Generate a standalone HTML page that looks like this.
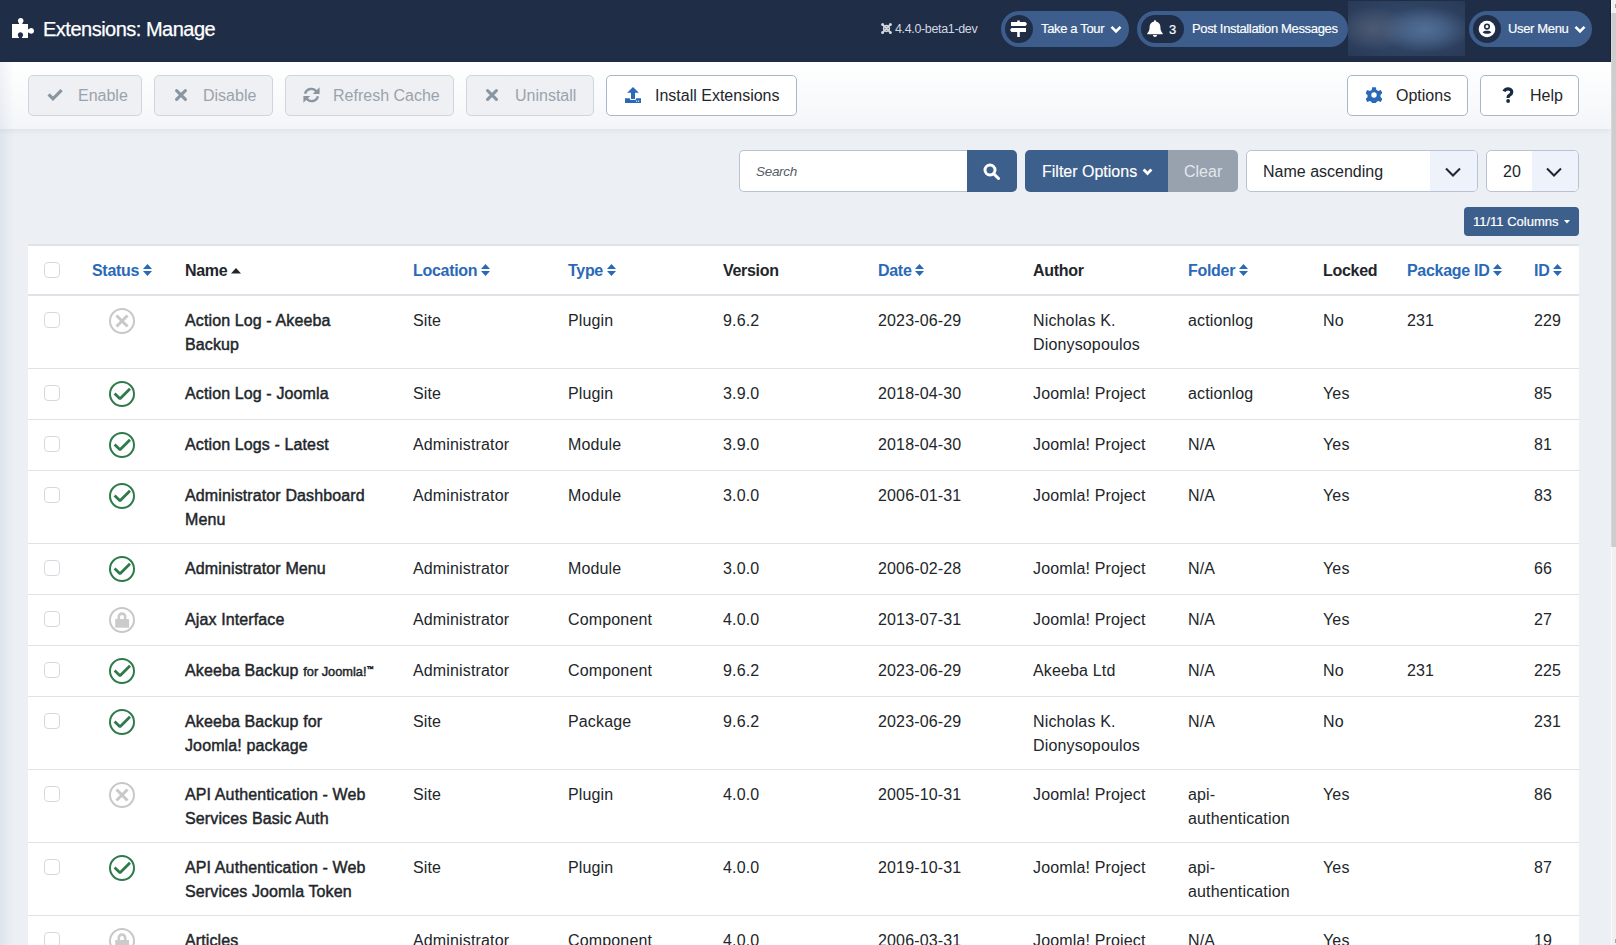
<!DOCTYPE html>
<html><head><meta charset="utf-8">
<style>
*{box-sizing:border-box;margin:0;padding:0}
html,body{width:1616px;height:945px;overflow:hidden}
body{font-family:"Liberation Sans",sans-serif;background:#ecf0f5;color:#22262a;position:relative}
.abs{position:absolute}
#hdr{left:0;top:0;width:1611px;height:62px;background:#1f2d47}
#title{left:43px;top:16px;font-size:20px;letter-spacing:-0.5px;-webkit-text-stroke:0.25px #fff;line-height:26px;color:#fff;white-space:nowrap}
#ver{left:895px;top:21px;font-size:12.5px;letter-spacing:-0.35px;line-height:16px;color:#d3d8e0;white-space:nowrap}
.pill{position:absolute;top:11px;height:36px;border-radius:18px;background:#3d5e8d;color:#fff;font-size:13px;white-space:nowrap}
.pill .circ{position:absolute;left:4px;top:4px;width:28px;height:28px;border-radius:14px;background:#1f2d47}
.pill .txt{position:absolute;top:10px;line-height:16px;letter-spacing:-0.35px;-webkit-text-stroke:0.15px #fff}
#blur{left:1348px;top:1px;width:117px;height:55px;background:radial-gradient(ellipse 38% 42% at 66% 52%,rgba(82,110,150,1) 0%,rgba(82,110,150,.6) 45%,rgba(82,110,150,0) 100%),radial-gradient(ellipse 30% 40% at 22% 50%,rgba(80,92,115,.9) 0%,rgba(80,92,115,0) 100%),radial-gradient(ellipse 70% 70% at 50% 50%,#3a5274 0%,#2e4262 60%,#293a56 100%)}
#scroll{left:1611px;top:0;width:5px;height:945px;background:#f0f0f0;border-left:1px solid #fafafa}
#thumb{left:1611px;top:13px;width:5px;height:534px;background:#cdcdcd;border-left:1px solid #d8d8d8}
#sub{left:0;top:62px;width:1611px;height:67px;background:linear-gradient(#fff,#f3f6f9);box-shadow:0 2px 6px rgba(0,0,0,.06)}
.tb{position:absolute;top:75px;height:41px;border:1px solid #cfd5dc;border-radius:5px;background:#eef0f3;color:#9aa2ab;font-size:16px;line-height:39px;white-space:nowrap}
.tb.act{background:#fff;border-color:#aab6c7}
.tbt{position:absolute;top:85px;font-size:16px;line-height:22px;color:#22262a;white-space:nowrap}
.tbt.dis{color:#9aa3ad}

.fi{position:absolute;top:150px;height:42px}
#search{left:739px;width:229px;border:1px solid #b7c3d4;border-right:0;border-radius:5px 0 0 5px;background:#fff;font-style:italic;font-size:13.5px;letter-spacing:-0.3px;color:#565d66;padding-left:16px;padding-top:1px;line-height:40px}
#sbtn{left:967px;width:50px;background:#3d5f8c;border-radius:0 5px 5px 0}
#fopt{left:1025px;width:143px;background:#3d5f8c;border-radius:5px 0 0 5px;color:#fff;-webkit-text-stroke:0.15px #fff;font-size:16px;line-height:42px;padding-top:1px;padding-left:17px;white-space:nowrap}
#clear{left:1168px;width:70px;background:#98a2ae;border-radius:0 5px 5px 0;color:#e3e7ec;font-size:16px;line-height:42px;padding-top:1px;padding-left:16px}
.sel{border:1px solid #b7c3d4;border-radius:5px;background:#fff;font-size:16px;line-height:40px;padding-top:1px;color:#22262a;overflow:hidden;white-space:nowrap}
.sel .arr{position:absolute;top:0;right:0;height:40px;background:#eef2fa}
#cols{position:absolute;left:1464px;top:207px;width:115px;height:29px;background:#3d5f8c;border-radius:4px;color:#fff;font-size:13px;-webkit-text-stroke:0.2px #fff;line-height:29px;padding-left:9px;white-space:nowrap}
#tbl{position:absolute;left:28px;top:244px;width:1551px;border-collapse:collapse;table-layout:fixed;background:#fff;font-size:16px;line-height:24px;border-top:2px solid #dfe3e8}
#tbl td,#tbl th{padding:13px 16px 11px;text-align:left;vertical-align:top;white-space:nowrap;font-weight:400}
#tbl thead th{font-weight:700;letter-spacing:-0.3px;border-bottom:2px solid #dfe3e8;color:#22262a}
#tbl thead th a{color:#2a69b8;text-decoration:none}
#tbl tbody tr{border-bottom:1px solid #dfe3e8}
#tbl tbody td{letter-spacing:0.15px}
#tbl td.cb,#tbl td.st,#tbl thead th.cb{padding-top:12px;padding-bottom:12px}
#tbl tbody th.nm{font-weight:400;-webkit-text-stroke:0.45px #22262a;letter-spacing:0.12px}
#tbl small{font-size:12.8px;letter-spacing:0;line-height:1}
.chk{display:inline-block;width:16px;height:16px;border:1px solid #d5d9de;border-radius:4px;vertical-align:top;margin-top:4px;background:#fff}
.si{display:inline-block;vertical-align:top;width:26px;height:26px;border-radius:50%;border:2px solid #c8c8c8;position:relative;margin-left:17px}
.si svg{position:absolute;left:-2px;top:-2px}
.si.ok{border-color:#2e7a4b}
.sort{display:inline-block;vertical-align:top;margin-left:4px;margin-top:5px}
</style></head>
<body>
<div id="hdr" class="abs"></div>
<svg class="abs" style="left:11px;top:18px" width="23" height="21" viewBox="0 0 23 21"><path fill="#fff" d="M1 6h6.5c.6 0 .8-.6.4-1-.7-.6-1-1.4-1-2.2C6.9 1.3 8 0 9.7 0s2.8 1.3 2.8 2.8c0 .8-.4 1.6-1 2.2-.4.4-.2 1 .4 1H17v4.7c0 .6.6.8 1 .4.6-.7 1.4-1 2.2-1 1.5 0 2.8 1.1 2.8 2.8s-1.3 2.8-2.8 2.8c-.8 0-1.6-.4-2.2-1-.4-.4-1-.2-1 .4V20H11.5c-.6 0-.8-.6-.4-1 .6-.6 1-1.3 1-2.1 0-1.5-1.2-2.7-2.7-2.7S6.8 15.4 6.8 16.9c0 .8.4 1.5 1 2.1.4.4.2 1-.4 1H1z"/></svg>
<div id="title" class="abs">Extensions: Manage</div>
<svg class="abs" style="left:881px;top:23px" width="11" height="11" viewBox="0 0 11 11"><g fill="none" stroke="#d3d8e0" stroke-width="1.6" stroke-linecap="round"><path d="M2 2.2l7 6.6M9 2.2l-7 6.6"/><path d="M3.2 3.8q2.3-2.4 4.6 0M3.2 7.2q2.3 2.4 4.6 0M3.8 3.2q-2.4 2.3 0 4.6M7.2 3.2q2.4 2.3 0 4.6"/></g><g fill="#d3d8e0"><circle cx="1.6" cy="1.6" r="1.5"/><circle cx="9.4" cy="1.6" r="1.5"/><circle cx="1.6" cy="9.4" r="1.5"/><circle cx="9.4" cy="9.4" r="1.5"/></g></svg>
<div id="ver" class="abs">4.4.0-beta1-dev</div>
<div class="pill" style="left:1001px;width:128px"><div class="circ"><svg style="position:absolute;left:5px;top:5px" width="17" height="17" viewBox="0 0 17 17"><path fill="#fff" d="M1 2h14.5l1.5 2-1.5 2H1zM1.5 8H16v4H1.5L0 10zM7.2 0.5h2.6V2H7.2zM7.2 12h2.6v5H7.2z"/></svg></div><div class="txt" style="left:40px">Take a Tour</div><svg style="position:absolute;left:109px;top:14px" width="12" height="9" viewBox="0 0 12 9"><path d="M1.5 1.8l4.5 4.5 4.5-4.5" stroke="#fff" stroke-width="2.6" fill="none"/></svg></div>
<div class="pill" style="left:1137px;width:211px"><div class="circ" style="width:43px"><svg style="position:absolute;left:6px;top:5px" width="16" height="17" viewBox="0 0 16 17"><path fill="#fff" d="M8 0.3c.8 0 1 .5 1 1.2 2.8.5 4.4 2.8 4.4 5.5 0 3.1.8 4.7 2.2 6.3.4.5.2 1-.4 1H0.8c-.6 0-.8-.5-.4-1 1.4-1.6 2.2-3.2 2.2-6.3 0-2.7 1.6-5 4.4-5.5 0-.7.2-1.2 1-1.2zM6 15h4c0 1.2-.9 2-2 2s-2-.8-2-2z"/></svg><div style="position:absolute;left:28px;top:7px;font-size:13px;line-height:16px;color:#fff;-webkit-text-stroke:0.15px #fff">3</div></div><div class="txt" style="left:55px">Post Installation Messages</div></div>
<div id="blur" class="abs"></div>
<div class="pill" style="left:1469px;width:123px"><div class="circ"><svg style="position:absolute;left:5px;top:5px" width="18" height="18" viewBox="0 0 18 18"><circle cx="9" cy="9" r="8.3" fill="#fff"/><circle cx="9" cy="6.6" r="2.3" fill="none" stroke="#1f2d47" stroke-width="1.6"/><path d="M4.6 12.2c1.2-1.1 2.6-1.5 4.4-1.5s3.2.4 4.4 1.5c-1.2 1.1-2.6 1.6-4.4 1.6s-3.2-.5-4.4-1.6z" fill="#1f2d47"/></svg></div><div class="txt" style="left:39px">User Menu</div><svg style="position:absolute;left:105px;top:14px" width="12" height="9" viewBox="0 0 12 9"><path d="M1.5 1.8l4.5 4.5 4.5-4.5" stroke="#fff" stroke-width="2.6" fill="none"/></svg></div>

<div id="sub" class="abs"></div>
<div class="tb" style="left:28px;width:114px"></div><span class="tbt dis" style="left:78px">Enable</span>
<svg class="abs" style="left:47px;top:89px" width="16" height="13" viewBox="0 0 16 13"><path d="M1.6 5.4l4.4 4.4 8.6-8.6" stroke="#8a95a2" stroke-width="3.2" fill="none" stroke-linejoin="miter"/></svg>
<div class="tb" style="left:154px;width:119px"></div><span class="tbt dis" style="left:203px">Disable</span>
<svg class="abs" style="left:175px;top:89px" width="12" height="12" viewBox="0 0 12 12"><path d="M1.6 1.6l8.8 8.8M10.4 1.6l-8.8 8.8" stroke="#8a95a2" stroke-width="3" stroke-linecap="round" fill="none"/></svg>
<div class="tb" style="left:285px;width:169px"></div><span class="tbt dis" style="left:333px">Refresh Cache</span>
<svg class="abs" style="left:303px;top:87px" width="17" height="16" viewBox="0 0 17 16"><g fill="none" stroke="#8a95a2" stroke-width="2.4"><path d="M2.1 6.8A6.3 6.3 0 0 1 13.4 4.6"/><path d="M14.9 9.2A6.3 6.3 0 0 1 3.6 11.4"/></g><path fill="#8a95a2" d="M16.6 0.3V7.1H9.8zM0.4 15.7V8.9h6.8z"/></svg>
<div class="tb" style="left:466px;width:128px"></div><span class="tbt dis" style="left:515px">Uninstall</span>
<svg class="abs" style="left:486px;top:89px" width="12" height="12" viewBox="0 0 12 12"><path d="M1.6 1.6l8.8 8.8M10.4 1.6l-8.8 8.8" stroke="#8a95a2" stroke-width="3" stroke-linecap="round" fill="none"/></svg>
<div class="tb act" style="left:606px;width:191px"></div><span class="tbt" style="left:655px">Install Extensions</span>
<svg class="abs" style="left:625px;top:87px" width="16" height="16" viewBox="0 0 16 16"><path fill="#2a69b8" d="M8 0l5.8 5.8H10V12H6V5.8H2.2zM0 11.2h4.7l.8 1.8h5l.8-1.8H16V16H0z"/><circle cx="11.6" cy="14.2" r=".6" fill="#fff"/><circle cx="13.6" cy="14.2" r=".6" fill="#fff"/></svg>
<div class="tb act" style="left:1347px;width:121px"></div><span class="tbt" style="left:1396px">Options</span>
<svg class="abs" style="left:1366px;top:87px" width="16" height="16" viewBox="0 0 16 16"><path fill="#2a69b8" fill-rule="evenodd" d="M6.2 0.2h3.6l.5 2.6 1.9 1.1 2.5-.9 1.8 3.1-2 1.7v2.3l2 1.7-1.8 3.1-2.5-.9-1.9 1.1-.5 2.6H6.2l-.5-2.6-1.9-1.1-2.5.9L-.5 11.9l2-1.7V7.9l-2-1.7L1.3 3.1l2.5.9 1.9-1.1zM8 5.3a2.7 2.7 0 1 0 0 5.4 2.7 2.7 0 1 0 0-5.4z"/></svg>
<div class="tb act" style="left:1480px;width:99px"></div><span class="tbt" style="left:1530px">Help</span>
<svg class="abs" style="left:1502px;top:87px" width="12" height="16" viewBox="0 0 12 16"><path d="M2 4.4c.7-1.6 2.1-2.6 3.9-2.6 2.2 0 3.9 1.4 3.9 3.3 0 1.6-1 2.4-2.3 3.1-1 .5-1.4 1-1.4 2v.7" stroke="#1a2a44" stroke-width="3.2" fill="none"/><circle cx="6.1" cy="14" r="1.9" fill="#1a2a44"/></svg>
<div id="search" class="fi">Search</div>
<div id="sbtn" class="fi"><svg style="position:absolute;left:16px;top:13px" width="18" height="17" viewBox="0 0 18 17"><circle cx="7" cy="7" r="5" stroke="#fff" stroke-width="3" fill="none"/><path d="M10.5 10.5l5 5" stroke="#fff" stroke-width="3" stroke-linecap="round"/></svg></div>
<div id="fopt" class="fi">Filter Options <svg width="11" height="8" viewBox="0 0 11 8" style="vertical-align:1px"><path d="M1.6 1.6l3.9 3.9 3.9-3.9" stroke="#fff" stroke-width="2.8" fill="none"/></svg></div>
<div id="clear" class="fi">Clear</div>
<div class="fi sel" style="left:1246px;width:232px"><span style="padding-left:16px">Name ascending</span><div class="arr" style="width:47px"><svg style="position:absolute;left:15px;top:16px" width="16" height="10" viewBox="0 0 16 10"><path d="M1 1.5l7 7 7-7" stroke="#22262a" stroke-width="2" fill="none"/></svg></div></div>
<div class="fi sel" style="left:1486px;width:93px"><span style="padding-left:16px">20</span><div class="arr" style="width:46px"><svg style="position:absolute;left:14px;top:16px" width="16" height="10" viewBox="0 0 16 10"><path d="M1 1.5l7 7 7-7" stroke="#22262a" stroke-width="2" fill="none"/></svg></div></div>
<div id="cols">11/11 Columns <svg width="6" height="4" viewBox="0 0 6 4" style="vertical-align:2px;margin-left:2px"><path d="M0 0h6L3 3.5z" fill="#fff"/></svg></div>
<table id="tbl">
<colgroup><col style="width:48px"><col style="width:93px"><col style="width:228px"><col style="width:155px"><col style="width:155px"><col style="width:155px"><col style="width:155px"><col style="width:155px"><col style="width:135px"><col style="width:84px"><col style="width:127px"><col style="width:61px"></colgroup>
<thead><tr>
<th class="cb"><span class="chk"></span></th>
<th><a>Status</a><svg class="sort" width="9" height="12" viewBox="0 0 9 12"><path d="M4.5 0L9 5H0zM0 7h9l-4.5 5z" fill="#2a69b8"/></svg></th>
<th>Name<svg class="sort" width="10" height="6" viewBox="0 0 10 6" style="margin-top:9px;margin-left:4px"><path d="M5 0L10 5.5H0z" fill="#22262a"/></svg></th>
<th><a>Location</a><svg class="sort" width="9" height="12" viewBox="0 0 9 12"><path d="M4.5 0L9 5H0zM0 7h9l-4.5 5z" fill="#2a69b8"/></svg></th>
<th><a>Type</a><svg class="sort" width="9" height="12" viewBox="0 0 9 12"><path d="M4.5 0L9 5H0zM0 7h9l-4.5 5z" fill="#2a69b8"/></svg></th>
<th>Version</th>
<th><a>Date</a><svg class="sort" width="9" height="12" viewBox="0 0 9 12"><path d="M4.5 0L9 5H0zM0 7h9l-4.5 5z" fill="#2a69b8"/></svg></th>
<th>Author</th>
<th><a>Folder</a><svg class="sort" width="9" height="12" viewBox="0 0 9 12"><path d="M4.5 0L9 5H0zM0 7h9l-4.5 5z" fill="#2a69b8"/></svg></th>
<th>Locked</th>
<th><a>Package ID</a><svg class="sort" width="9" height="12" viewBox="0 0 9 12"><path d="M4.5 0L9 5H0zM0 7h9l-4.5 5z" fill="#2a69b8"/></svg></th>
<th><a>ID</a><svg class="sort" width="9" height="12" viewBox="0 0 9 12"><path d="M4.5 0L9 5H0zM0 7h9l-4.5 5z" fill="#2a69b8"/></svg></th>
</tr></thead>
<tbody>
<tr><td class="cb"><span class="chk"></span></td><td class="st"><span class="si dis"><svg width="26" height="26" viewBox="0 0 26 26"><path d="M7.5 7.5l11 11M18.5 7.5l-11 11" stroke="#c8c8c8" stroke-width="3" fill="none"/></svg></span></td><th class="nm">Action Log - Akeeba<br>Backup</th><td>Site</td><td>Plugin</td><td>9.6.2</td><td>2023-06-29</td><td>Nicholas K.<br>Dionysopoulos</td><td>actionlog</td><td>No</td><td>231</td><td>229</td></tr>
<tr><td class="cb"><span class="chk"></span></td><td class="st"><span class="si ok"><svg width="26" height="26" viewBox="0 0 26 26"><path d="M5.6 12.6l5.4 5.2 10-10" stroke="#2e7a4b" stroke-width="2.8" stroke-linejoin="bevel" fill="none"/></svg></span></td><th class="nm">Action Log - Joomla</th><td>Site</td><td>Plugin</td><td>3.9.0</td><td>2018-04-30</td><td>Joomla! Project</td><td>actionlog</td><td>Yes</td><td></td><td>85</td></tr>
<tr><td class="cb"><span class="chk"></span></td><td class="st"><span class="si ok"><svg width="26" height="26" viewBox="0 0 26 26"><path d="M5.6 12.6l5.4 5.2 10-10" stroke="#2e7a4b" stroke-width="2.8" stroke-linejoin="bevel" fill="none"/></svg></span></td><th class="nm">Action Logs - Latest</th><td>Administrator</td><td>Module</td><td>3.9.0</td><td>2018-04-30</td><td>Joomla! Project</td><td>N/A</td><td>Yes</td><td></td><td>81</td></tr>
<tr><td class="cb"><span class="chk"></span></td><td class="st"><span class="si ok"><svg width="26" height="26" viewBox="0 0 26 26"><path d="M5.6 12.6l5.4 5.2 10-10" stroke="#2e7a4b" stroke-width="2.8" stroke-linejoin="bevel" fill="none"/></svg></span></td><th class="nm">Administrator Dashboard<br>Menu</th><td>Administrator</td><td>Module</td><td>3.0.0</td><td>2006-01-31</td><td>Joomla! Project</td><td>N/A</td><td>Yes</td><td></td><td>83</td></tr>
<tr><td class="cb"><span class="chk"></span></td><td class="st"><span class="si ok"><svg width="26" height="26" viewBox="0 0 26 26"><path d="M5.6 12.6l5.4 5.2 10-10" stroke="#2e7a4b" stroke-width="2.8" stroke-linejoin="bevel" fill="none"/></svg></span></td><th class="nm">Administrator Menu</th><td>Administrator</td><td>Module</td><td>3.0.0</td><td>2006-02-28</td><td>Joomla! Project</td><td>N/A</td><td>Yes</td><td></td><td>66</td></tr>
<tr><td class="cb"><span class="chk"></span></td><td class="st"><span class="si dis"><svg width="26" height="26" viewBox="0 0 26 26"><path d="M9.8 12.5V9.8a3.2 3.2 0 0 1 6.4 0V12.5" stroke="#cbcbcb" stroke-width="2.6" fill="none"/><rect x="6.2" y="12" width="13.8" height="8.7" fill="#cbcbcb"/></svg></span></td><th class="nm">Ajax Interface</th><td>Administrator</td><td>Component</td><td>4.0.0</td><td>2013-07-31</td><td>Joomla! Project</td><td>N/A</td><td>Yes</td><td></td><td>27</td></tr>
<tr><td class="cb"><span class="chk"></span></td><td class="st"><span class="si ok"><svg width="26" height="26" viewBox="0 0 26 26"><path d="M5.6 12.6l5.4 5.2 10-10" stroke="#2e7a4b" stroke-width="2.8" stroke-linejoin="bevel" fill="none"/></svg></span></td><th class="nm">Akeeba Backup <small>for Joomla!<span style="font-size:7px;position:relative;top:-5px;letter-spacing:0">&trade;</span></small></th><td>Administrator</td><td>Component</td><td>9.6.2</td><td>2023-06-29</td><td>Akeeba Ltd</td><td>N/A</td><td>No</td><td>231</td><td>225</td></tr>
<tr><td class="cb"><span class="chk"></span></td><td class="st"><span class="si ok"><svg width="26" height="26" viewBox="0 0 26 26"><path d="M5.6 12.6l5.4 5.2 10-10" stroke="#2e7a4b" stroke-width="2.8" stroke-linejoin="bevel" fill="none"/></svg></span></td><th class="nm">Akeeba Backup for<br>Joomla! package</th><td>Site</td><td>Package</td><td>9.6.2</td><td>2023-06-29</td><td>Nicholas K.<br>Dionysopoulos</td><td>N/A</td><td>No</td><td></td><td>231</td></tr>
<tr><td class="cb"><span class="chk"></span></td><td class="st"><span class="si dis"><svg width="26" height="26" viewBox="0 0 26 26"><path d="M7.5 7.5l11 11M18.5 7.5l-11 11" stroke="#c8c8c8" stroke-width="3" fill="none"/></svg></span></td><th class="nm">API Authentication - Web<br>Services Basic Auth</th><td>Site</td><td>Plugin</td><td>4.0.0</td><td>2005-10-31</td><td>Joomla! Project</td><td>api-<br>authentication</td><td>Yes</td><td></td><td>86</td></tr>
<tr><td class="cb"><span class="chk"></span></td><td class="st"><span class="si ok"><svg width="26" height="26" viewBox="0 0 26 26"><path d="M5.6 12.6l5.4 5.2 10-10" stroke="#2e7a4b" stroke-width="2.8" stroke-linejoin="bevel" fill="none"/></svg></span></td><th class="nm">API Authentication - Web<br>Services Joomla Token</th><td>Site</td><td>Plugin</td><td>4.0.0</td><td>2019-10-31</td><td>Joomla! Project</td><td>api-<br>authentication</td><td>Yes</td><td></td><td>87</td></tr>
<tr><td class="cb"><span class="chk"></span></td><td class="st"><span class="si dis"><svg width="26" height="26" viewBox="0 0 26 26"><path d="M9.8 12.5V9.8a3.2 3.2 0 0 1 6.4 0V12.5" stroke="#cbcbcb" stroke-width="2.6" fill="none"/><rect x="6.2" y="12" width="13.8" height="8.7" fill="#cbcbcb"/></svg></span></td><th class="nm">Articles</th><td>Administrator</td><td>Component</td><td>4.0.0</td><td>2006-03-31</td><td>Joomla! Project</td><td>N/A</td><td>Yes</td><td></td><td>19</td></tr>
</tbody></table>

<div class="abs" style="left:0;top:62px;width:14px;height:883px;background:linear-gradient(to right,rgba(40,70,120,.065),rgba(40,70,120,0))"></div>
<div id="scroll" class="abs"></div><div id="thumb" class="abs"></div><div class="abs" style="left:1615px;top:4px;width:1px;height:4px;background:#a3a3a3"></div><div class="abs" style="left:1615px;top:939px;width:1px;height:4px;background:#a3a3a3"></div><div class="abs" style="left:1610px;top:0;width:1px;height:62px;background:#15223b"></div>
</body></html>
